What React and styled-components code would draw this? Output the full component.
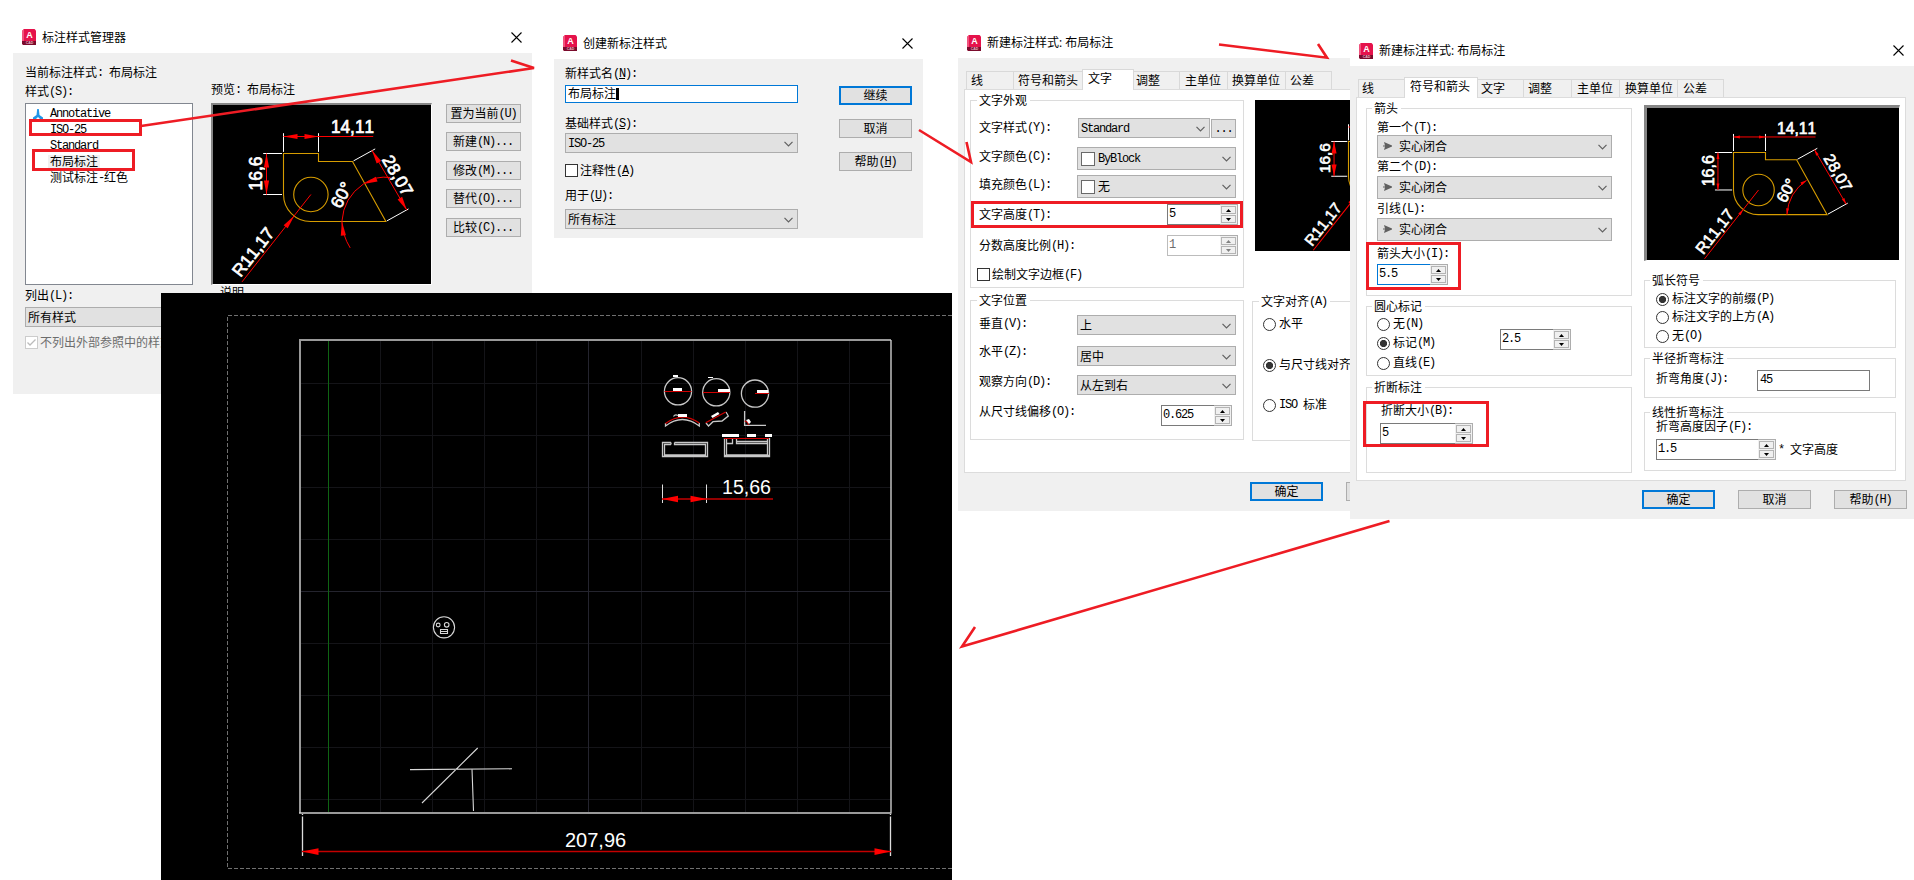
import React from "react";
import styled, { createGlobalStyle, css } from "styled-components";

const Global = createGlobalStyle`
  * { box-sizing: border-box; }
  html, body { margin: 0; background: #fff; }
  body { font-family: "Noto Sans CJK SC", sans-serif; font-size: 12px; line-height: 14px; color: #000; }
`;

const Desktop = styled.main`
  position: relative;
  width: 1914px;
  height: 880px;
  overflow: hidden;
  background: #fff;
`;

/* ---------- text ---------- */
const Txt = styled.span`
  display: block;
  flex: none;
  height: 14px;
  line-height: 12px;
  white-space: pre;
  font-size: 12px;
`;
const Latin = styled.span`
  font-family: "Liberation Mono", monospace;
  font-size: 12px;
  line-height: 1;
  letter-spacing: -1.2px;
  vertical-align: 1px;
`;
const Key = styled.span`
  text-decoration: underline;
  text-underline-offset: 1px;
`;

function Text({ children, mnemonic, ...rest }) {
  const parts = children.split(/([\u3000-\u9fff]+)/).filter(Boolean);
  return (
    <Txt {...rest}>
      {parts.map((p, i) => {
        if (/[\u3000-\u9fff]/.test(p)) return p;
        const m = mnemonic && p.match(/^(\()(\w)(\).*)$/);
        return <Latin key={i}>{m ? <>{m[1]}<Key>{m[2]}</Key>{m[3]}</> : p}</Latin>;
      })}
    </Txt>
  );
}

/* ---------- windows ---------- */
const Frame = styled.section`
  position: absolute;
  left: ${(p) => p.$x}px;
  top: ${(p) => p.$y}px;
  width: ${(p) => p.$w}px;
  height: ${(p) => p.$h}px;
  display: flex;
  flex-direction: column;
  overflow: hidden;
  background: #fff;
`;
const TitleBar = styled.header`
  flex: none;
  display: flex;
  align-items: center;
  height: ${(p) => p.$h}px;
  padding: 0 ${(p) => p.$right}px 0 9px;
`;
const Title = styled.h1`
  flex: 1;
  margin: 1px 0 0 6px;
  font: 400 12px/16px "Open Sans", "Noto Sans CJK SC", sans-serif;
  white-space: pre;
`;
const Body = styled.div`
  flex: 1;
  background: #f0f0f0;
`;

function AppIcon() {
  return (
    <svg width="14" height="16" viewBox="0 0 14 16">
      <path d="M2 0H12.500L14 1.500V16H1L0 14V2Z" fill="#e5124b" />
      <path d="M0 2L2 0V12L0 14Z" fill="#f0527d" />
      <path d="M0 12H14V16H1L0 14.500Z" fill="#7a0b2c" />
      <text x="7.500" y="9.300" fontSize="9" fontWeight="700" fontFamily="Liberation Sans, sans-serif" fill="#fff" textAnchor="middle">A</text>
      <text x="7.500" y="15.200" fontSize="3.500" fontWeight="700" fontFamily="Liberation Sans, sans-serif" fill="#e9b7c6" textAnchor="middle">CAD</text>
    </svg>
  );
}
function Close() {
  return (
    <svg width="11" height="11" viewBox="0 0 11 11" stroke="#000" strokeWidth="1.100">
      <path d="M.5 .5L10.500 10.500M10.500 .5L.5 10.500" />
    </svg>
  );
}

function Window({ x, y, w, h, bar, title, closeRight, children }) {
  return (
    <Frame $x={x} $y={y} $w={w} $h={h}>
      <TitleBar $h={bar} $right={closeRight || 0}>
        <AppIcon />
        <Title>{title}</Title>
        {closeRight && <Close />}
      </TitleBar>
      <Body>{children}</Body>
    </Frame>
  );
}

/* ---------- controls ---------- */
const Button = styled.button`
  flex: none;
  display: flex;
  align-items: center;
  justify-content: ${(p) => (p.$start ? "flex-start" : "center")};
  width: ${(p) => p.$w || 73}px;
  height: 19px;
  padding: 0 ${(p) => (p.$start ? 6 : 0)}px;
  border: ${(p) => (p.$primary ? "2px solid #0078d7" : "1px solid #adadad")};
  background: #e1e1e1;
  color: #000;
  font-family: inherit;
  margin: ${(p) => p.$m || "0"};
`;

const SelectBox = styled.div`
  flex: none;
  display: flex;
  align-items: center;
  width: ${(p) => p.$w}px;
  height: ${(p) => p.$h || 20}px;
  padding: 1px 4px 0 2px;
  border: 1px solid #adadad;
  background: #e1e1e1;
  > :last-child { margin-left: auto; }
`;
const Swatch = styled.i`
  width: 14px;
  height: 14px;
  margin: 0 3px 1px 1px;
  border: 1px solid #696969;
  background: #fff;
`;
const Chevron = () => (
  <svg width="9" height="6" viewBox="0 0 9 6" fill="none" stroke="#606060" strokeWidth="1.200">
    <path d="M.5 .8L4.500 4.800L8.500 .8" />
  </svg>
);
const ArrowGlyph = styled.svg`
  margin: 0 7px 2px 3px;
`;
function Select({ w, h, swatch, arrow, children }) {
  return (
    <SelectBox $w={w} $h={h}>
      {swatch && <Swatch />}
      {arrow && (
        <ArrowGlyph width="9" height="8" viewBox="0 0 9 8" fill="#606060">
          <path d="M1 0L9 3.500V4.500L1 8L2 4.500H0V3.500H2Z" />
        </ArrowGlyph>
      )}
      <Text>{children}</Text>
      <Chevron />
    </SelectBox>
  );
}

const Field = styled.div`
  flex: none;
  display: flex;
  align-items: center;
  width: ${(p) => p.$w}px;
  height: ${(p) => p.$h || 21}px;
  padding: 0 0 1px 2px;
  border: 1px solid ${(p) => (p.$blue ? "#0078d7" : "#7a7a7a")};
  background: #fff;
`;
const SpinBox = styled.div`
  flex: none;
  display: flex;
  width: ${(p) => p.$w}px;
  height: 21px;
  background: #f0f0f0;
  border: solid #adadad;
  border-width: 0 1px 1px 0;
  ${(p) => p.$off && css`color: #6d6d6d;`}
`;
const SpinInput = styled.div`
  flex: 1;
  display: flex;
  align-items: center;
  height: 21px;
  padding: 0 0 1px 1px;
  background: #fff;
  border: solid ${(p) => (p.$blue ? "#0078d7" : p.$off ? "#bcbcbc" : "#7a7a7a")};
  border-width: 1px 0 1px 1px;
`;
const SpinKeys = styled.div`
  display: flex;
  flex-direction: column;
  gap: 1px;
  width: 17px;
  padding: 1px;
  border-top: 1px solid #adadad;
`;
const SpinKey = styled.span`
  display: flex;
  align-items: center;
  justify-content: center;
  height: 9px;
  border: 1px solid #b4b4b4;
  color: ${(p) => (p.$off ? "#808080" : "#000")};
`;
function Spinner({ w = 71, blue, off, children }) {
  return (
    <SpinBox $w={w} $off={off}>
      <SpinInput $blue={blue} $off={off}><Text>{children}</Text></SpinInput>
      <SpinKeys>
        <SpinKey $off={off}><svg width="5" height="3"><path d="M0 3L2.500 0L5 3Z" fill="currentColor" /></svg></SpinKey>
        <SpinKey $off={off}><svg width="5" height="3"><path d="M0 0L2.500 3L5 0Z" fill="currentColor" /></svg></SpinKey>
      </SpinKeys>
    </SpinBox>
  );
}

const Box = styled.i`
  flex: none;
  display: flex;
  align-items: center;
  justify-content: center;
  width: 13px;
  height: 13px;
  margin-right: 2px;
  border: 1px solid ${(p) => (p.$off ? "#ccc" : "#333")};
  background: #fff;
`;
const Dot = styled.i`
  flex: none;
  width: 13px;
  height: 13px;
  margin-right: 3px;
  border: 1px solid #333;
  border-radius: 50%;
  background: ${(p) => (p.$on ? "radial-gradient(circle, #333 3.2px, #fff 4px)" : "#fff")};
`;

const Row = styled.div`
  display: flex;
  align-items: ${(p) => (p.$top ? "flex-start" : "center")};
  height: ${(p) => p.$h || 14}px;
  margin-top: ${(p) => p.$mt || 0}px;
  margin-left: ${(p) => p.$ml || 0}px;
  gap: ${(p) => p.$gap || 0}px;
  color: ${(p) => p.$color || "inherit"};
`;
const Label = styled(Text)`
  width: ${(p) => (p.$w ? p.$w + "px" : "auto")};
  margin-bottom: ${(p) => p.$lift || 0}px;
`;
const Group = styled.section`
  height: ${(p) => p.$h}px;
  margin-top: ${(p) => p.$mt || 0}px;
  padding-left: ${(p) => p.$pl ?? 8}px;
  border: 1px solid #dcdcdc;
`;
const Legend = styled(Text)`
  width: max-content;
  margin: -8px 0 0 ${(p) => (p.$ml || 0) - 2}px;
  padding: 0 3px 0 2px;
  line-height: 13px;
  background: #fff;
`;

/* ---------- tabs ---------- */
const TabStrip = styled.nav`
  display: flex;
  align-items: flex-end;
  height: 31px;
  padding-left: 8px;
`;
const Tab = styled.div`
  flex: none;
  display: flex;
  align-items: center;
  width: ${(p) => p.$w}px;
  height: 18px;
  padding-left: ${(p) => p.$pad}px;
  border: solid #d9d9d9;
  border-width: 1px ${(p) => (p.$open ? 0 : 1)}px 0 ${(p) => (p.$first ? 1 : 0)}px;
  ${(p) => p.$on && css`
    position: relative;
    height: 21px;
    margin-bottom: -1px;
    padding-bottom: 2px;
    background: #fff;
    border-width: 1px 1px 0 1px;
  `}
`;
const Panel = styled.div`
  display: grid;
  grid-template-columns: ${(p) => p.$cols};
  height: 384px;
  width: ${(p) => p.$w}px;
  margin-left: 6px;
  padding: ${(p) => p.$pad};
  border: 1px solid #dcdcdc;
  background: #fff;
`;
const Footer = styled.footer`
  display: flex;
  gap: 23px;
  padding: 9px 0 0 292px;
`;
const SideGroups = styled.div`
  width: 252px;
  margin-top: 19px;
`;
function Tabs({ items }) {
  return (
    <TabStrip>
      {items.map(([name, w, pad, on], i) => (
        <Tab key={name} $w={w} $pad={pad} $on={on} $first={i === 0} $open={items[i + 1] && items[i + 1][3]}>
          <Text>{name}</Text>
        </Tab>
      ))}
    </TabStrip>
  );
}

/* ---------- dimension preview ---------- */
const PreviewFrame = styled.div`
  width: ${(p) => p.$w}px;
  height: ${(p) => p.$h}px;
  border: solid;
  border-width: ${(p) => p.$bw}px 1px 1px ${(p) => p.$bw}px;
  border-color: #868686 #fff #fff #868686;
  margin: ${(p) => p.$m || 0};
  background: #000;
  svg { display: block; }
`;

function arrow(x, y, deg, len, half) {
  return <path transform={`translate(${x} ${y}) rotate(${deg})`} d={`M0 0L${len} ${-half}V${half}Z`} fill="#f00" />;
}

/* Sample part, drawn from its upper left corner. */
function Part({ x, y, s, head, wide, font, endX, endY, outside }) {
  const a = head, b = wide;
  return (
    <g transform={`translate(${x} ${y}) scale(${s})`} fill="none" strokeWidth={1 / s}>
      <g stroke="#d69c00" strokeWidth={1.1 / s}>
        <path d="M0 0H35V8H69L102.400 68H27A27 27 0 0 1 0 41Z" />
        <circle cx="27.400" cy="41" r="17.200" />
      </g>
      <g stroke="#fff">
        <path d="M0 -20.300V-1.600M35 -20.300V-1.600M-20.300 0H-1.500M-20.300 41H-1.500M70 7.400L91.700 -4.600M103.400 67.400L125 55.400" />
      </g>
      <g stroke="#f00">
        <path d="M0 -17H89.700M-17 0V41M88.400 -3.300L123.400 56.700" />
        <path d={`M27.400 41L${endX} ${endY}`} />
        <path d="M80 30.400Q60 44 58.400 68" />
        {outside && <path d="M107 24Q92 22 80 30.400M58.400 68Q59 82 66.700 94.400" />}
      </g>
      {arrow(0, -17, 0, a, b)}
      {arrow(35, -17, 180, a, b)}
      {arrow(-17, 0, 90, a, b)}
      {arrow(-17, 41, -90, a, b)}
      {arrow(88.4, -3.3, 60, a, b)}
      {arrow(123.4, 56.7, -120, a, b)}
      {arrow(10.8, 62.2, 128, a, b)}
      {outside ? arrow(80, 30.4, -20, a, b) : arrow(80, 30.4, 147, a, b)}
      {outside ? arrow(58.4, 68, 84, a, b) : arrow(58.4, 68, -84, a, b)}
      <g fill="#fff" stroke="#fff" strokeWidth=".7" fontFamily="Liberation Sans, Arial, sans-serif" fontSize={font}>
        <text x="47.500" y="-20.500" textLength="43" lengthAdjust="spacingAndGlyphs" style={{ fontKerning: "none" }}>14,11</text>
        <text transform="translate(-21.500 37) rotate(-90)">16,6</text>
        <text transform="translate(98 6) rotate(60)">28,07</text>
        <text transform="translate(57 56) rotate(-62)">60°</text>
        <text transform={`translate(${endX - 1.5} ${endY - 4}) rotate(-52)`} style={{ fontKerning: "none" }}>R11,17</text>
      </g>
    </g>
  );
}

/* ---------- style manager ---------- */
const Manager = styled.div`
  padding: 13px 11px 0 12px;
`;
const ManagerGrid = styled.div`
  display: grid;
  grid-template-columns: 168px 221px 75px;
  column-gap: 18px;
`;
const Column = styled.div`
  display: flex;
  flex-direction: column;
  align-items: flex-start;
  padding-top: ${(p) => p.$pt || 0}px;
  margin-left: ${(p) => p.$ml || 0}px;
`;
const ListBox = styled.ul`
  width: 168px;
  height: 182px;
  margin: 4px 0;
  padding: 2px 0 0 7px;
  border: 1px solid #828790;
  background: #fff;
  list-style: none;
`;
const ListItem = styled.li`
  display: flex;
  align-items: center;
  height: 16px;
  padding-left: ${(p) => (p.$icon ? 0 : 15)}px;
  svg { margin-right: 5px; }
  ${(p) => p.$on && css`
    > span { background: #f0f0f0; }
  `}
  > span { padding: 0 2px; }
`;

function StyleManager() {
  return (
    <Window x={13} y={21} w={519} h={373} bar={32} closeRight={10} title="标注样式管理器">
      <Manager>
        <Text>当前标注样式: 布局标注</Text>
        <ManagerGrid>
          <Column $pt={5}>
            <Text>样式(S):</Text>
            <ListBox>
              <ListItem $icon>
                <svg width="10" height="11" viewBox="0 0 10 11" fill="#2196e8">
                  <path d="M4.200 0H5.800L6.500 6L10 8.500V10.500L7 10L5 8L3 10L0 10.500V8.500L3.500 6Z" />
                </svg>
                <Text>Annotative</Text>
              </ListItem>
              <ListItem><Text>ISO-25</Text></ListItem>
              <ListItem><Text>Standard</Text></ListItem>
              <ListItem $on><Text>布局标注</Text></ListItem>
              <ListItem><Text>测试标注-红色</Text></ListItem>
            </ListBox>
            <Text>列出(L):</Text>
            <Row $h={20} $mt={4}><Select w={168}>所有样式</Select></Row>
            <Row $h={13} $mt={9} $color="#6d6d6d">
              <Box $off>
                <svg width="9" height="7" viewBox="0 0 9 7" fill="none" stroke="#bbb" strokeWidth="1.300"><path d="M.5 3.500L3 6L8.500 .5" /></svg>
              </Box>
              <Text>不列出外部参照中的样式(D)</Text>
            </Row>
          </Column>
          <Column $pt={3}>
            <Text>预览: 布局标注</Text>
            <PreviewFrame $w={221} $h={182} $bw={2} $m="6px 0 1px">
              <svg width="218" height="179" viewBox="213 105 218 179">
                <Part x={283.5} y={153.5} s={1} head={14} wide={2.6} font={17.5} endX={-41.5} endY={128.4} outside />
              </svg>
            </PreviewFrame>
            <Row $ml={9}><Text>说明</Text></Row>
          </Column>
          <Column $pt={24} $ml={-4}>
            <Button $w={75} $m="0 0 9px"><Text>置为当前(U)</Text></Button>
            <Button $w={75} $start $m="0 0 10px"><Text>新建(N)...</Text></Button>
            <Button $w={75} $start $m="0 0 9px"><Text>修改(M)...</Text></Button>
            <Button $w={75} $start $m="0 0 10px"><Text>替代(O)...</Text></Button>
            <Button $w={75} $start><Text>比较(C)...</Text></Button>
          </Column>
        </ManagerGrid>
      </Manager>
    </Window>
  );
}

/* ---------- create new style ---------- */
const CreateForm = styled.div`
  display: grid;
  grid-template-columns: 233px 73px;
  column-gap: 41px;
  padding: 8px 0 0 11px;
`;
const Caret = styled.i`
  width: 3px;
  height: 12px;
  background: #000;
`;

function CreateStyle() {
  return (
    <Window x={554} y={27} w={369} h={211} bar={32} closeRight={10} title="创建新标注样式">
      <CreateForm>
        <Column>
          <Text mnemonic>新样式名(N):</Text>
          <Row $h={18} $mt={4}><Field $w={233} $h={18} $blue><Text>布局标注</Text><Caret /></Field></Row>
          <Row $mt={14}><Text mnemonic>基础样式(S):</Text></Row>
          <Row $h={20} $mt={2}><Select w={233}>ISO-25</Select></Row>
          <Row $h={13} $mt={11}><Box /><Text mnemonic>注释性(A)</Text></Row>
          <Row $mt={12}><Text mnemonic>用于(U):</Text></Row>
          <Row $h={20} $mt={6}><Select w={233}>所有标注</Select></Row>
        </Column>
        <Column $pt={19}>
          <Button $primary><Text>继续</Text></Button>
          <Button $m="14px 0"><Text>取消</Text></Button>
          <Button><Text mnemonic>帮助(H)</Text></Button>
        </Column>
      </CreateForm>
    </Window>
  );
}

/* ---------- text tab ---------- */
function TextTab() {
  return (
    <Window x={958} y={27} w={392} h={484} bar={31} title="新建标注样式: 布局标注">
      <Tabs items={[["线", 48, 4], ["符号和箭头", 68, 4], ["文字", 52, 5, true], ["调整", 46, 2], ["主单位", 48, 5], ["换算单位", 58, 4], ["公差", 46, 4]]} />
      <Panel $w={560} $cols="274px 270px" $pad="10px 0 0 5px">
        <div>
          <Group $h={188}>
            <Legend>文字外观</Legend>
            <Row $h={20} $mt={11}><Label $w={99}>文字样式(Y):</Label><Select w={132}>Standard</Select><Button $w={25} $m="1px 0 0 1px"><Text>...</Text></Button></Row>
            <Row $h={23} $mt={9}><Label $w={98} $lift={4}>文字颜色(C):</Label><Select w={159} h={23} swatch>ByBlock</Select></Row>
            <Row $h={23} $mt={5}><Label $w={98} $lift={4}>填充颜色(L):</Label><Select w={159} h={23} swatch>无</Select></Row>
            <Row $h={21} $mt={6}><Label $w={188}>文字高度(T):</Label><Spinner>5</Spinner></Row>
            <Row $h={21} $mt={10}><Label $w={188}>分数高度比例(H):</Label><Spinner off>1</Spinner></Row>
            <Row $h={13} $mt={12} $ml={-2}><Box /><Text>绘制文字边框(F)</Text></Row>
          </Group>
          <Group $h={140} $mt={12}>
            <Legend>文字位置</Legend>
            <Row $h={20} $mt={8}><Label $w={98} $lift={2}>垂直(V):</Label><Select w={159}>上</Select></Row>
            <Row $h={20} $mt={11}><Label $w={98} $lift={8}>水平(Z):</Label><Select w={159}>居中</Select></Row>
            <Row $h={20} $mt={9}><Label $w={98} $lift={7}>观察方向(D):</Label><Select w={159}>从左到右</Select></Row>
            <Row $h={21} $mt={10}><Label $w={182} $lift={8}>从尺寸线偏移(O):</Label><Spinner>0.625</Spinner></Row>
          </Group>
        </div>
        <Column $ml={8}>
          <PreviewFrame $w={252} $h={152} $bw={0} $m="0 0 0 3px">
            <svg width="251" height="151" viewBox="1255 100 251 151">
              <Part x={1348.5} y={141.5} s={0.85} head={14} wide={3} font={18} endX={-41.4} endY={128} outside />
            </svg>
          </PreviewFrame>
          <SideBox>
            <Group $h={140} $mt={49}>
              <Legend>文字对齐(A)</Legend>
              <Row $mt={9} $ml={2}><Dot /><Text>水平</Text></Row>
              <Row $mt={27} $ml={2}><Dot $on /><Text>与尺寸线对齐</Text></Row>
              <Row $mt={26} $ml={2}><Dot /><Text>ISO 标准</Text></Row>
            </Group>
          </SideBox>
        </Column>
      </Panel>
      <Footer><Button $primary><Text>确定</Text></Button><Button><Text>取消</Text></Button></Footer>
    </Window>
  );
}
const SideBox = styled.div`
  width: 256px;
`;

/* ---------- symbols and arrows tab ---------- */
function SymbolsTab() {
  return (
    <Window x={1350} y={35} w={564} h={484} bar={31} closeRight={10} title="新建标注样式: 布局标注">
      <Tabs items={[["线", 46, 3], ["符号和箭头", 74, 5, true], ["文字", 46, 3], ["调整", 48, 4], ["主单位", 48, 5], ["换算单位", 58, 5], ["公差", 46, 5]]} />
      <Panel $w={550} $cols="266px 256px" $pad="10px 0 0 9px">
        <div>
          <Group $h={188} $pl={10}>
            <Legend $ml={-3}>箭头</Legend>
            <Row $mt={6}><Text>第一个(T):</Text></Row>
            <Row $h={23}><Select w={235} h={23} arrow>实心闭合</Select></Row>
            <Row $mt={2}><Text>第二个(D):</Text></Row>
            <Row $h={23} $mt={2}><Select w={235} h={23} arrow>实心闭合</Select></Row>
            <Row $mt={3}><Text>引线(L):</Text></Row>
            <Row $h={23} $mt={2}><Select w={235} h={23} arrow>实心闭合</Select></Row>
            <Row $mt={6}><Text>箭头大小(I):</Text></Row>
            <Row $h={21} $mt={3}><Spinner blue>5.5</Spinner></Row>
          </Group>
          <Group $h={70} $mt={10} $pl={10}>
            <Legend $ml={-3}>圆心标记</Legend>
            <Row $h={57} $top>
              <Column $pt={4}>
                <Row><Dot /><Text>无(N)</Text></Row>
                <Row $mt={5}><Dot $on /><Text>标记(M)</Text></Row>
                <Row $mt={6}><Dot /><Text>直线(E)</Text></Row>
              </Column>
              <Row $h={21} $mt={16} $ml={65}><Spinner>2.5</Spinner></Row>
            </Row>
          </Group>
          <Group $h={86} $mt={11} $pl={13}>
            <Legend $ml={-6}>折断标注</Legend>
            <Row $mt={10} $ml={1}><Text>折断大小(B):</Text></Row>
            <Row $h={21} $mt={5}><Spinner w={93}>5</Spinner></Row>
          </Group>
        </div>
        <Column $ml={12}>
          <PreviewFrame $w={256} $h={156} $bw={3} $m="-3px 0 0 0">
            <svg width="252" height="152" viewBox="1647 108 252 152">
              <Part x={1733.5} y={152.5} s={0.914} head={7} wide={1.6} font={17.5} endX={-31.7} endY={116.4} />
            </svg>
          </PreviewFrame>
          <SideGroups>
            <Group $h={68} $pl={11}>
              <Legend $ml={-4}>弧长符号</Legend>
              <Row $mt={5}><Dot $on /><Text>标注文字的前缀(P)</Text></Row>
              <Row $mt={4}><Dot /><Text>标注文字的上方(A)</Text></Row>
              <Row $mt={5}><Dot /><Text>无(O)</Text></Row>
            </Group>
            <Group $h={40} $mt={10} $pl={11}>
              <Legend $ml={-4}>半径折弯标注</Legend>
              <Row $h={21} $mt={5}><Label $w={101} $lift={4}>折弯角度(J):</Label><Field $w={113}><Text>45</Text></Field></Row>
            </Group>
            <Group $h={59} $mt={14} $pl={11}>
              <Legend $ml={-4}>线性折弯标注</Legend>
              <Row $mt={1}><Text>折弯高度因子(F):</Text></Row>
              <Row $h={21} $mt={5} $gap={2}><Spinner w={120}>1.5</Spinner><Text>* 文字高度</Text></Row>
            </Group>
          </SideGroups>
        </Column>
      </Panel>
      <Footer><Button $primary><Text>确定</Text></Button><Button><Text>取消</Text></Button><Button><Text>帮助(H)</Text></Button></Footer>
    </Window>
  );
}

/* ---------- layout sheet ---------- */
const Sheet = styled.svg`
  position: absolute;
  left: 161px;
  top: 293px;
  background: #000;
`;
const steps = (from, to, step) => Array.from({ length: Math.floor((to - from) / step) + 1 }, (_, i) => from + i * step);

function Drawing() {
  return (
    <Sheet width="791" height="587" viewBox="161 293 791 587" fill="none">
      <path d="M952 315.500H227.500V868.500H952" stroke="#707070" strokeDasharray="4 2" />
      <g stroke="#141418">
        {steps(380.5, 880, 52.1).map((x) => <path key={x} d={`M${Math.floor(x) + 0.5} 341V812`} />)}
        {steps(383.5, 812, 52).map((y) => <path key={y} d={`M301 ${y}H891`} />)}
      </g>
      <path d="M588.500 341V812M301 591.500H891" stroke="#24242e" />
      <path d="M328.500 341V812" stroke="#0f6413" />
      <path d="M300 813V340" stroke="#999" strokeWidth="2" />
      <path d="M299 340H891" stroke="#999" strokeWidth="2" />
      <path d="M891 340V813.500M299 813H891.500" stroke="#ccc" strokeWidth="1.400" />

      <g stroke="#d8d8d8" strokeWidth="1.100">
        <circle cx="444" cy="627.300" r="10.600" />
        <circle cx="438.200" cy="625" r="1.900" />
        <circle cx="446.700" cy="624.800" r="2.300" />
        <path d="M440.500 629.500H447.500V633.500H440.500ZM440.500 631.500H447.500" />
        <path d="M410 769.600L512 768.800M422 803L477.700 748M472 769L473.500 811" />
      </g>

      <g stroke="#c8c8c8" strokeWidth="1.300">
        <circle cx="678" cy="391.300" r="13.600" />
        <circle cx="716.300" cy="392.300" r="13.600" />
        <circle cx="755" cy="393.600" r="13.600" />
        <path d="M665.500 423V426Q682.300 413 699.300 426V423" />
        <path d="M673.500 416.500Q675 414 678 415.500" />
        <path d="M706 423L708.500 426L713 421.700L722 421L728.300 416L726 412" />
        <path d="M744.600 411V425.300H766" />
        <path d="M671 442.500H662.500V456.500H707.500V442.500H674.500M671 444.500H664.500V455H705.500V444.500H674.500V442.500M671 442.500V444.500" />
        <path d="M724.500 438V456.500H769.500V438M726.500 439V455H767.500V439M726.500 443.500H732.500V438.500M736.500 438.500V443.500H767.500M736.500 441.500H767.500M724.500 455.500H769.500" />
      </g>
      <path d="M664.500 391.500H691.500M703 392.500H730M755 393.500H769M665.500 423.500Q682.300 411 699.300 423M705.700 422.700L725.700 412M724 438.500H769M744.600 421Q748 421.500 748.500 425" stroke="#d00000" strokeWidth="1.200" />
      <path fill="#fff" d="M673 388h9v3h-9zM673 375h5v2h-5zM718 389h12v3h-12zM708 377h5v1h-5zM757 390h11v3h-11zM678 414h9v3h-9zM722 434h17v3h-17zM747 434h9v3h-9zM765 434h7v3h-7zM711 416l7-4 1.500 2-7 4zM746 420l3-1 2 3-2 2z" />

      <g stroke="#ddd">
        <path d="M662.500 484.500V503M706.500 484.500V503" />
        <path d="M302.500 814V815M302.500 816.500V856M890.500 814V815M890.500 816.500V856" strokeWidth="1.300" />
      </g>
      <path d="M662 499H773M302 851.500H891" stroke="#c40000" strokeWidth="1.300" />
      <path fill="#f00" d="M662 499L678 495.700V502.300ZM707 499L690.500 495.700V502.300ZM302 851.600L318.500 848.300V855ZM891 851.600L874.500 848.300V855Z" />
      <g fill="#fff" fontFamily="Liberation Sans, Arial, sans-serif" fontSize="20">
        <text x="722" y="494" textLength="49" lengthAdjust="spacingAndGlyphs">15,66</text>
        <text x="565" y="847">207,96</text>
      </g>
    </Sheet>
  );
}

/* ---------- red markup ---------- */
const MarkupLayer = styled.svg`
  position: absolute;
  inset: 0;
  pointer-events: none;
`;
const Markup = () => (
  <MarkupLayer width="1914" height="880" fill="none" stroke="#ee1c24" strokeWidth="3">
    <rect x="30.500" y="120.500" width="110" height="14" />
    <rect x="33.500" y="150.500" width="100" height="19" />
    <rect x="972.500" y="202.500" width="269" height="24" />
    <rect x="1367.500" y="243.500" width="92" height="45" />
    <rect x="1364.500" y="402.500" width="123" height="43" />
    <g strokeWidth="2.600">
      <path d="M141 126L534 68L511 60.500" />
      <path d="M919 130L971 162L966.500 142" />
      <path d="M1219 44.500L1327 57.700L1318 44" />
      <path d="M1389.500 521L962 646.500L975 627" />
    </g>
  </MarkupLayer>
);

export default function App() {
  return (
    <Desktop>
      <Global />
      <StyleManager />
      <CreateStyle />
      <TextTab />
      <SymbolsTab />
      <Drawing />
      <Markup />
    </Desktop>
  );
}
